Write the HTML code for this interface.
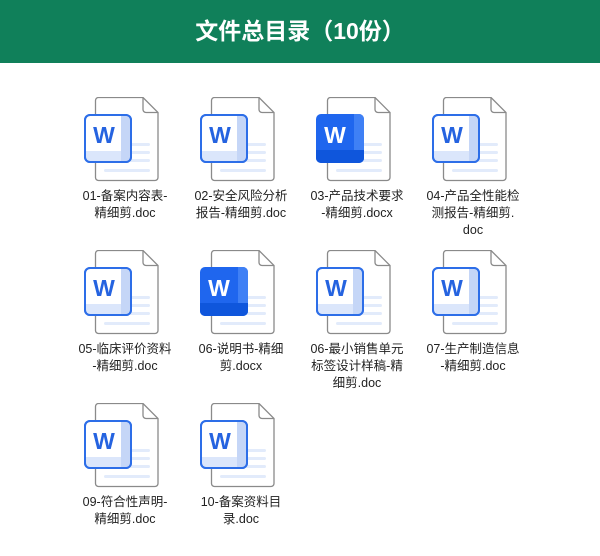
<!DOCTYPE html><html><head><meta charset="utf-8"><style>
body{margin:0;width:600px;height:556px;background:#fff;position:relative;overflow:hidden;font-family:"Liberation Sans","Noto Sans CJK SC",sans-serif}
.hd{position:absolute;left:0;top:0;width:600px;height:63px;background:#10805a;color:#fff;font-weight:bold;font-size:23px;text-align:center;line-height:62px;font-family:"Liberation Sans","Noto Sans CJK SC",sans-serif}
.it{position:absolute;width:116px}
.it svg{position:absolute;left:21px;top:0}
.it .t{position:absolute;top:91px;left:0;width:100px;text-align:center;font-size:12.5px;line-height:17px;color:#222}
</style></head><body>
<div class="hd">文件总目录（10份）</div>
<svg width="0" height="0" style="position:absolute"><defs>
<g id="pg"><path d="M11.5 3.5a3 3 0 0 1 3-3H59L74 15.5V80.5a3 3 0 0 1-3 3H14.5a3 3 0 0 1-3-3Z" fill="#fff" stroke="#8a8a8a" stroke-width="1.3"/><path d="M59 .5V12.5a3 3 0 0 0 3 3H74" fill="none" stroke="#8a8a8a" stroke-width="1.3"/>
<rect x="46" y="46" width="20" height="3" rx="1.5" fill="#e2ebfb"/><rect x="46" y="54" width="20" height="3" rx="1.5" fill="#e2ebfb"/><rect x="46" y="62" width="20" height="3" rx="1.5" fill="#e2ebfb"/><rect x="20" y="72" width="46" height="3" rx="1.5" fill="#e2ebfb"/></g>
<g id="lt"><use href="#pg"/><rect x="1" y="18" width="46" height="47" rx="5" fill="#fff" stroke="#2d6ee8" stroke-width="2"/><path d="M2 54H46V60a4 4 0 0 1-4 4H6a4 4 0 0 1-4-4Z" fill="#dbe6fb"/><path d="M37 19H42a4 4 0 0 1 4 4V60a4 4 0 0 1-4 4H37Z" fill="#c5d6f7"/><rect x="1" y="18" width="46" height="47" rx="5" fill="none" stroke="#2d6ee8" stroke-width="2"/><text x="20" y="46" font-family="Liberation Sans" font-weight="bold" font-size="23" fill="#2563e0" text-anchor="middle">W</text></g>
<g id="dk"><use href="#pg"/><rect x="0" y="17" width="48" height="49" rx="5" fill="#1f66ee"/><path d="M38 17H43a5 5 0 0 1 5 5V61a5 5 0 0 1-5 5H38Z" fill="#3f80f5"/><path d="M0 53H48V61a5 5 0 0 1-5 5H5a5 5 0 0 1-5-5Z" fill="#0f56dc"/><text x="19" y="46" font-family="Liberation Sans" font-weight="bold" font-size="23" fill="#fff" text-anchor="middle">W</text></g>
</defs></svg>
<div class="it" style="left:63px;top:97px"><svg width="80" height="90"><use href="#lt"/></svg><div class="t" style="left:12px">01-备案内容表-<br>精细剪.doc</div></div>
<div class="it" style="left:179px;top:97px"><svg width="80" height="90"><use href="#lt"/></svg><div class="t" style="left:12px">02-安全风险分析<br>报告-精细剪.doc</div></div>
<div class="it" style="left:295px;top:97px"><svg width="80" height="90"><use href="#dk"/></svg><div class="t" style="left:12px">03-产品技术要求<br>-精细剪.docx</div></div>
<div class="it" style="left:411px;top:97px"><svg width="80" height="90"><use href="#lt"/></svg><div class="t" style="left:12px">04-产品全性能检<br>测报告-精细剪.<br>doc</div></div>
<div class="it" style="left:63px;top:250px"><svg width="80" height="90"><use href="#lt"/></svg><div class="t" style="left:12px">05-临床评价资料<br>-精细剪.doc</div></div>
<div class="it" style="left:179px;top:250px"><svg width="80" height="90"><use href="#dk"/></svg><div class="t" style="left:12px">06-说明书-精细<br>剪.docx</div></div>
<div class="it" style="left:295px;top:250px"><svg width="80" height="90"><use href="#lt"/></svg><div class="t" style="left:12px">06-最小销售单元<br>标签设计样稿-精<br>细剪.doc</div></div>
<div class="it" style="left:411px;top:250px"><svg width="80" height="90"><use href="#lt"/></svg><div class="t" style="left:12px">07-生产制造信息<br>-精细剪.doc</div></div>
<div class="it" style="left:63px;top:403px"><svg width="80" height="90"><use href="#lt"/></svg><div class="t" style="left:12px">09-符合性声明-<br>精细剪.doc</div></div>
<div class="it" style="left:179px;top:403px"><svg width="80" height="90"><use href="#lt"/></svg><div class="t" style="left:12px">10-备案资料目<br>录.doc</div></div>
</body></html>
